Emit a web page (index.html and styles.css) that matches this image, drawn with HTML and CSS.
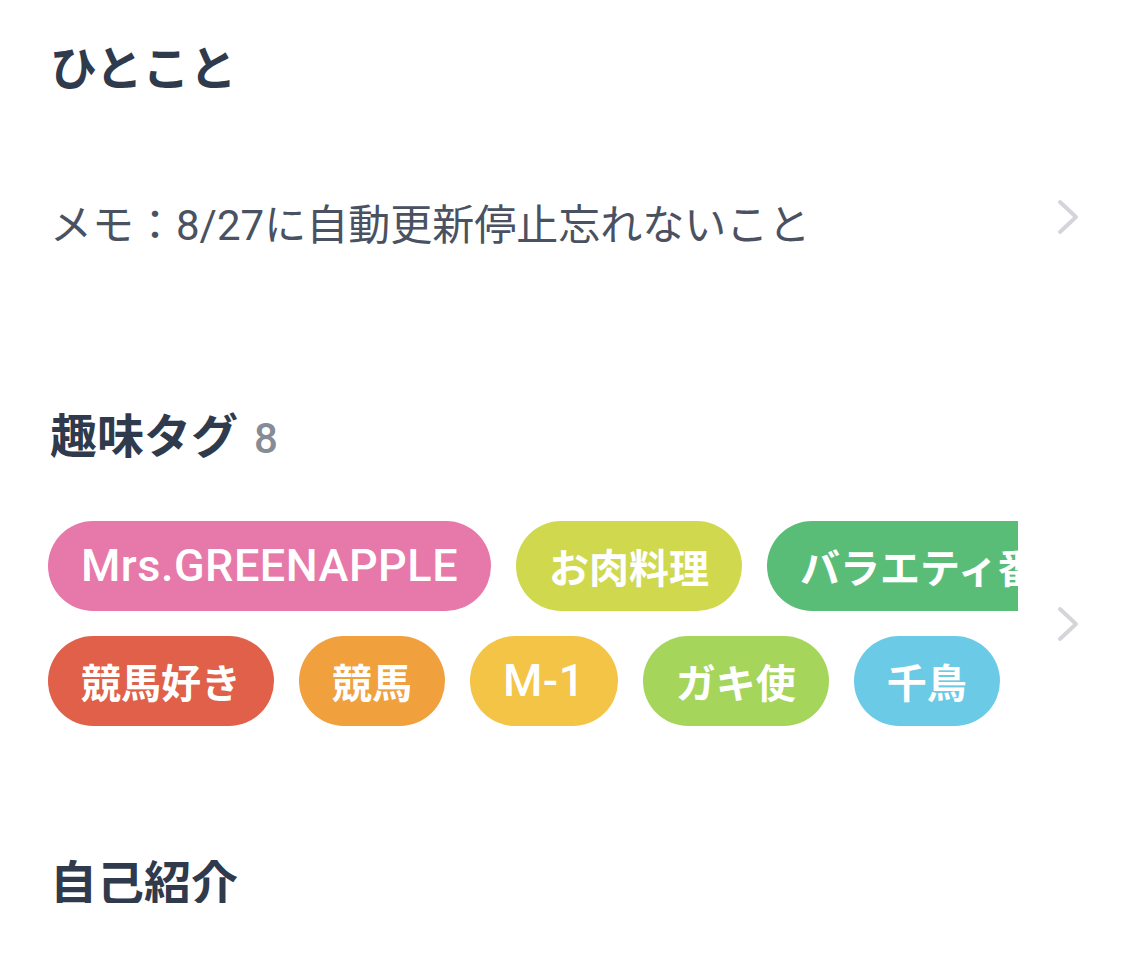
FILE: index.html
```html
<!DOCTYPE html>
<html lang="ja">
<head>
  <meta charset="UTF-8" />
  <meta name="viewport" content="width=device-width, initial-scale=1" />
  <title>プロフィール</title>
  <link rel="stylesheet" href="styles.css">
</head>
<body>
  <section class="section">
    <h2 class="section-title">ひとこと</h2>
    <div class="row memo-row">
      <p class="memo">メモ：8/27に自動更新停止忘れないこと</p>
      <svg class="chevron" viewBox="0 0 24 38" width="24" height="38">
        <path d="M4 4 L20 19 L4 34" fill="none" stroke="#d3d5da" stroke-width="4" stroke-linecap="round" stroke-linejoin="round"/>
      </svg>
    </div>
  </section>

  <section class="section tags-section">
    <h2 class="section-title">趣味タグ<span class="count">8</span></h2>
    <div class="row tags-row">
      <div class="tags">
        <div class="tag-line">
          <span class="tag tag-en pink">Mrs.GREENAPPLE</span>
          <span class="tag lime">お肉料理</span>
          <span class="tag green">バラエティ番組</span>
        </div>
        <div class="tag-line">
          <span class="tag red">競馬好き</span>
          <span class="tag orange">競馬</span>
          <span class="tag tag-en yellow">M-1</span>
          <span class="tag yellowgreen">ガキ使</span>
          <span class="tag blue">千鳥</span>
        </div>
      </div>
      <svg class="chevron" viewBox="0 0 24 38" width="24" height="38">
        <path d="M4 4 L20 19 L4 34" fill="none" stroke="#d3d5da" stroke-width="4" stroke-linecap="round" stroke-linejoin="round"/>
      </svg>
    </div>
  </section>

  <section class="section intro-section">
    <h2 class="section-title">自己紹介</h2>
  </section>
</body>
</html>
```

FILE: styles.css
```css
* {
  margin: 0;
  padding: 0;
  box-sizing: border-box;
}

body {
  font-family: Roboto, "Noto Sans CJK JP", sans-serif;
  background: #ffffff;
  color: #2d3748;
  padding: 42px 45px 0 48px;
  overflow: hidden;
}

.section-title {
  font-family: "Noto Sans CJK JP", sans-serif;
  font-size: 47px;
  line-height: 46px;
  font-weight: 700;
  color: #2f3a4c;
  padding-left: 2px;
}

.count {
  font-family: Roboto, sans-serif;
  font-size: 42px;
  font-weight: 500;
  color: #868c95;
  margin-left: 16px;
}

.row {
  display: flex;
  align-items: center;
}

.memo-row {
  margin-top: 83px;
  height: 100px;
}

.memo {
  flex: 1;
  font-size: 42px;
  color: #4a5262;
  padding-left: 2px;
}

.chevron {
  flex: 0 0 24px;
}

.memo-row .chevron {
  margin-bottom: 8px;
}

.tags-section {
  margin-top: 139px;
}

.tags-row {
  margin-top: 59px;
}

.tags {
  flex: 1;
  min-width: 0;
  overflow: hidden;
  margin-right: 38px;
  display: flex;
  flex-direction: column;
  gap: 25px;
}

.tag-line {
  display: flex;
  gap: 25px;
  white-space: nowrap;
}

.tag {
  flex: 0 0 auto;
  height: 90px;
  line-height: 90px;
  padding: 0 33px;
  border-radius: 45px;
  color: #ffffff;
  font-family: "Noto Sans CJK JP", sans-serif;
  font-size: 40px;
  font-weight: 700;
}

.tag-en {
  font-family: Roboto, sans-serif;
  font-size: 45px;
  font-weight: 500;
  letter-spacing: 0.5px;
}

.pink { background: #e779aa; }
.lime { background: #d0d94e; }
.green { background: #59bd78; }
.red { background: #e0604a; }
.orange { background: #f0a03d; }
.yellow { background: #f3c446; }
.yellowgreen { background: #a6d55c; }
.blue { background: #6bcbe6; }

.intro-section {
  margin-top: 131px;
}
```
